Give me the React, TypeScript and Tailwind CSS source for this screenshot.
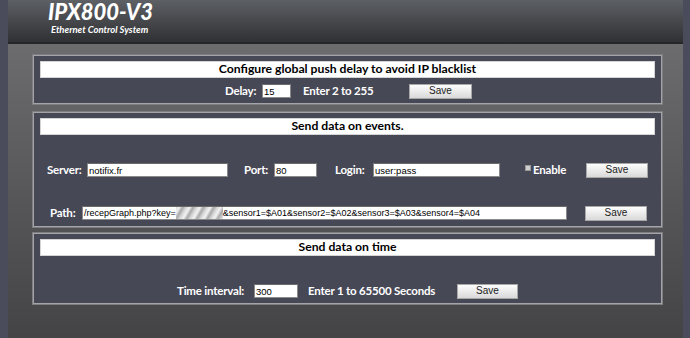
import React from "react";

const label = "text-white font-bold text-[11.5px] tracking-[-0.2px] leading-none whitespace-nowrap font-['Lato',sans-serif]";
const inputCls =
  "h-[14px] border border-[#8a8a8a] border-t-[#6a6a6a] bg-white text-black text-[9.5px] leading-none px-[1px] font-['Liberation_Sans',Arial,sans-serif] outline-none";
const btnCls =
  "h-[15px] border border-[#a8a8a8] bg-gradient-to-b from-[#fdfdfd] to-[#d9d9d9] text-[#222] text-[10px] leading-none flex items-center justify-center font-['Liberation_Sans',Arial,sans-serif]";

function Title({ children }: { children: React.ReactNode }) {
  return (
    <div className="h-[17px] bg-white border border-[#d4d4d4] flex items-center justify-center text-black font-bold text-[12.2px] leading-none font-['Lato',sans-serif]">
      {children}
    </div>
  );
}

function Panel({ className, children }: { className: string; children: React.ReactNode }) {
  return (
    <div className={"border border-[#a4a4a8] shadow-[0_0_0_1px_#7e7e82] bg-[#474856] px-[6px] flex flex-col " + className}>
      {children}
    </div>
  );
}

export default function App() {
  return (
    <div className="w-[690px] h-[338px] bg-[#4a4b5b] pl-[8px] pr-[7px] flex overflow-hidden">
      <div className="flex-1 flex flex-col">
        <div className="h-[44px] shrink-0 bg-gradient-to-b from-[#5d6065] to-[#303134] border-b-2 border-[#252627] pl-[40px] flex flex-col items-start">
          <div className="text-white font-black italic text-[22px] leading-[24px] pr-[6px] font-['Lato',sans-serif]">
            IPX800-V3
          </div>
          <div className="text-white font-bold italic text-[9.5px] leading-[11px] ml-[3px] pr-[3px] font-['Lato',sans-serif]">
            Ethernet Control System
          </div>
        </div>
        <div className="flex-1 bg-gradient-to-b from-[#6c6c6e] to-[#444446] pl-[25px] pr-[21px] pt-[11px] flex flex-col">
          <Panel className="pt-[5px] pb-[5px]">
            <Title>Configure global push delay to avoid IP blacklist</Title>
            <div className="mt-[6px] h-[14px] flex items-center">
              <span className={label + " ml-[185px] w-[31px]"}>Delay:</span>
              <input readOnly value="15" className={inputCls + " ml-[6px] w-[29px]"} />
              <span className={label + " ml-[12px] w-[69px]"}>Enter 2 to 255</span>
              <div className={btnCls + " ml-[37px] w-[63px]"}>Save</div>
            </div>
          </Panel>

          <Panel className="mt-[8px] pt-[5px] pb-[6px]">
            <Title>Send data on events.</Title>
            <div className="mt-[28px] h-[14px] flex items-center">
              <span className={label + " ml-[7px] w-[35px]"}>Server:</span>
              <input readOnly value="notifix.fr" className={inputCls + " ml-[5px] w-[141px]"} />
              <span className={label + " ml-[16px] w-[24px]"}>Port:</span>
              <input readOnly value="80" className={inputCls + " ml-[6px] w-[43px]"} />
              <span className={label + " ml-[18px] w-[32px]"}>Login:</span>
              <input readOnly value="user:pass" className={inputCls + " ml-[6px] w-[127px]"} />
              <span className="ml-[25px] w-[6px] h-[6px] self-start mt-[2px] bg-[#cfcfcf] border border-[#9a9a9a]" />
              <span className={label + " ml-[2px] w-[36px]"}>Enable</span>
              <div className={btnCls + " ml-[17px] w-[62px]"}>Save</div>
            </div>
            <div className="mt-[29px] h-[14px] flex items-center">
              <span className={label + " ml-[10px] w-[26px]"}>Path:</span>
              <div className={inputCls + " text-[9px] ml-[6px] w-[485px] flex items-center whitespace-nowrap overflow-hidden"}>
                <span>/recepGraph.php?key=</span>
                <span className="inline-block w-[47px] h-[12px] bg-[image:repeating-linear-gradient(120deg,#d8d8d8_0px,#f2f2f2_3px,#a9a9a9_6px,#d8d8d8_9px)]" />
                <span>&amp;sensor1=$A01&amp;sensor2=$A02&amp;sensor3=$A03&amp;sensor4=$A04</span>
              </div>
              <div className={btnCls + " ml-[18px] w-[62px]"}>Save</div>
            </div>
          </Panel>

          <Panel className="mt-[6px] pt-[5px] pb-[5px]">
            <Title>Send data on time</Title>
            <div className="mt-[28px] h-[14px] flex items-center">
              <span className={label + " ml-[137px] w-[71px]"}>Time interval:</span>
              <input readOnly value="300" className={inputCls + " ml-[6px] w-[44px]"} />
              <span className={label + " ml-[10px] w-[131px]"}>Enter 1 to 65500 Seconds</span>
              <div className={btnCls + " ml-[18px] w-[61px]"}>Save</div>
            </div>
          </Panel>
        </div>
      </div>
    </div>
  );
}
